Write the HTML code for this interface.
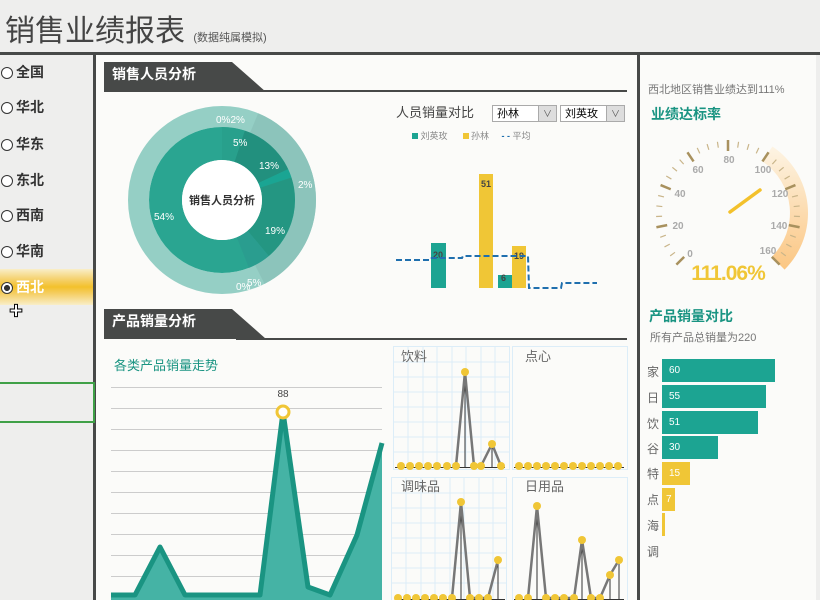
<!DOCTYPE html>
<html><head><meta charset="utf-8"><style>
body{margin:0;width:820px;height:600px;overflow:hidden;background:#eeeeed;font-family:"Liberation Sans","Noto Sans CJK SC",sans-serif;position:relative}
.a{position:absolute}
.rad{position:absolute;left:1px;font-size:14px;font-weight:bold;color:#333;height:20px;line-height:20px}
.rad i{display:inline-block;width:12px;height:12px;border:1px solid #333;border-radius:50%;background:#fff;vertical-align:-2px;margin-right:3px;box-sizing:border-box}
.tab{position:absolute;left:104px;width:162px;height:30px;background:#474948;clip-path:polygon(0 0,128px 0,162px 30px,0 30px);color:#fff;font-weight:bold;font-size:14px;line-height:24px;padding-left:8px;box-sizing:border-box}
.sel{position:absolute;height:17px;border:1px solid #aaa;background:#fff;font-size:11px;line-height:17px;padding-left:4px;box-sizing:border-box}
.sel b{position:absolute;right:0;top:0;width:17px;height:15px;background:#ddd;border-left:1px solid #aaa;font-weight:normal;font-size:9px;text-align:center;color:#555}
.bar{position:absolute;left:662px;height:23px;color:#fff;font-size:10px;line-height:23px;padding-left:7px;box-sizing:border-box}
.bl{position:absolute;left:647px;font-size:12px;color:#666}
</style></head><body>
<div class="a" style="left:5px;top:6px;font-size:30px;color:#444;">销售业绩报表 <span style="font-size:11px;color:#555">(数据纯属模拟)</span></div>
<div class="a" style="left:0;top:52px;width:820px;height:3px;background:#474948"></div>
<div class="a" style="left:96px;top:55px;width:541px;height:545px;background:#fbfbf9"></div>
<div class="a" style="left:640px;top:55px;width:176px;height:545px;background:#fbfbf9"></div>
<div class="a" style="left:93px;top:55px;width:3px;height:545px;background:#474948"></div>
<div class="a" style="left:637px;top:55px;width:3px;height:545px;background:#474948"></div>
<div class="rad" style="top:62px"><i></i>全国</div>
<div class="rad" style="top:97px"><i></i>华北</div>
<div class="rad" style="top:134px"><i></i>华东</div>
<div class="rad" style="top:170px"><i></i>东北</div>
<div class="rad" style="top:205px"><i></i>西南</div>
<div class="rad" style="top:241px"><i></i>华南</div>
<div class="a" style="left:0;top:269px;width:93px;height:36px;background:linear-gradient(#f9eec8,#f5d069 30%,#f3c12c 50%,#f5d069 70%,#f9eec8)"></div>
<div class="rad" style="top:277px;color:#fff"><i style="background:radial-gradient(#333 40%,#fff 45%)"></i>西北</div>
<div class="a" style="left:9px;top:301px;font-size:14px;color:#fff;-webkit-text-stroke:1px #000;font-weight:bold">✚</div>
<div class="a" style="left:0;top:382px;width:95px;height:2px;background:#3fa047"></div>
<div class="a" style="left:0;top:421px;width:95px;height:2px;background:#3fa047"></div>
<div class="a" style="left:93px;top:382px;width:2px;height:41px;background:#3fa047"></div>

<div class="tab" style="top:62px">销售人员分析</div>
<div class="a" style="left:236px;top:90px;width:391px;height:2px;background:#474948"></div>
<div class="tab" style="top:309px">产品销量分析</div>
<div class="a" style="left:236px;top:338px;width:391px;height:2px;background:#474948"></div>

<svg class="a" style="left:0;top:0" width="820" height="600">
<g transform="rotate(-90 222 200)" fill="none">
<circle cx="222" cy="200" r="83.5" stroke="#95cfc5" stroke-width="21"/>
<circle cx="222" cy="200" r="83.5" stroke="#8cc4bb" stroke-width="21" stroke-dasharray="0 33 190 999"/>
<circle cx="222" cy="200" r="56.5" stroke="#2aa591" stroke-width="33"/>
<circle cx="222" cy="200" r="56.5" stroke="#28a08c" stroke-width="33" stroke-dasharray="18 999"/>
<circle cx="222" cy="200" r="56.5" stroke="#22907e" stroke-width="33" stroke-dasharray="0 18 46 999"/>
<circle cx="222" cy="200" r="56.5" stroke="#1aa593" stroke-width="33" stroke-dasharray="0 64 7 999"/>
<circle cx="222" cy="200" r="56.5" stroke="#249682" stroke-width="33" stroke-dasharray="0 71 67 999"/>
<circle cx="222" cy="200" r="56.5" stroke="#2a9d8f" stroke-width="33" stroke-dasharray="0 138 18 999"/>
</g>
<circle cx="222" cy="200" r="40" fill="#fff"/>
<g font-size="10" fill="#fff">
<text x="216" y="123">0%2%</text><text x="233" y="146">5%</text><text x="259" y="169">13%</text><text x="298" y="188">2%</text>
<text x="265" y="234">19%</text><text x="154" y="220">54%</text><text x="236" y="290">0%</text><text x="247" y="286">5%</text></g>
<text x="222" y="204" font-size="11" font-weight="bold" fill="#333" text-anchor="middle">销售人员分析</text>

<g font-size="9" font-weight="bold" fill="#444">
<rect x="431" y="243" width="15" height="45" fill="#1ca492"/>
<rect x="479" y="174" width="14" height="114" fill="#f0c636"/>
<rect x="498" y="275" width="14" height="13" fill="#1ca492"/>
<rect x="512" y="246" width="14" height="42" fill="#f0c636"/>
<text x="433" y="258">20</text><text x="481" y="187">51</text><text x="501" y="281">6</text><text x="514" y="259">19</text></g>
<polyline points="396,260 429,260 430,258 462,258 463,256 528,256 529,288 561,288 562,283 597,283" fill="none" stroke="#1f6fae" stroke-width="2" stroke-dasharray="6,3"/>

<defs><linearGradient id="g1" x1="0" y1="0" x2="0" y2="1"><stop offset="0" stop-color="#fdf4e4"/><stop offset="1" stop-color="#fbc682"/></linearGradient></defs>
<path d="M772.4,146.5 A80,80 0 0 1 784.6,269.6 L771.8,256.8 A62,62 0 0 0 762.4,161.4 Z" fill="url(#g1)"/>
<g stroke="#c9b58a" stroke-width="1.2">
<line x1="728" y1="141" x2="728" y2="147" transform="rotate(-126.56 728 213)"/><line x1="728" y1="141" x2="728" y2="147" transform="rotate(-118.13 728 213)"/><line x1="728" y1="141" x2="728" y2="147" transform="rotate(-109.69 728 213)"/>
<line x1="728" y1="141" x2="728" y2="147" transform="rotate(-92.81 728 213)"/><line x1="728" y1="141" x2="728" y2="147" transform="rotate(-84.38 728 213)"/><line x1="728" y1="141" x2="728" y2="147" transform="rotate(-75.94 728 213)"/>
<line x1="728" y1="141" x2="728" y2="147" transform="rotate(-59.06 728 213)"/><line x1="728" y1="141" x2="728" y2="147" transform="rotate(-50.63 728 213)"/><line x1="728" y1="141" x2="728" y2="147" transform="rotate(-42.19 728 213)"/>
<line x1="728" y1="141" x2="728" y2="147" transform="rotate(-25.31 728 213)"/><line x1="728" y1="141" x2="728" y2="147" transform="rotate(-16.88 728 213)"/><line x1="728" y1="141" x2="728" y2="147" transform="rotate(-8.44 728 213)"/>
<line x1="728" y1="141" x2="728" y2="147" transform="rotate(8.44 728 213)"/><line x1="728" y1="141" x2="728" y2="147" transform="rotate(16.88 728 213)"/><line x1="728" y1="141" x2="728" y2="147" transform="rotate(25.31 728 213)"/>
<line x1="728" y1="141" x2="728" y2="147" transform="rotate(42.19 728 213)"/><line x1="728" y1="141" x2="728" y2="147" transform="rotate(50.63 728 213)"/><line x1="728" y1="141" x2="728" y2="147" transform="rotate(59.06 728 213)"/>
<line x1="728" y1="141" x2="728" y2="147" transform="rotate(75.94 728 213)"/><line x1="728" y1="141" x2="728" y2="147" transform="rotate(84.38 728 213)"/><line x1="728" y1="141" x2="728" y2="147" transform="rotate(92.81 728 213)"/>
<line x1="728" y1="141" x2="728" y2="147" transform="rotate(109.69 728 213)"/><line x1="728" y1="141" x2="728" y2="147" transform="rotate(118.13 728 213)"/><line x1="728" y1="141" x2="728" y2="147" transform="rotate(126.56 728 213)"/>
</g>
<g stroke="#a8915e" stroke-width="2.5">
<line x1="728" y1="140" x2="728" y2="151" transform="rotate(-135 728 213)"/><line x1="728" y1="140" x2="728" y2="151" transform="rotate(-101.25 728 213)"/><line x1="728" y1="140" x2="728" y2="151" transform="rotate(-67.5 728 213)"/>
<line x1="728" y1="140" x2="728" y2="151" transform="rotate(-33.75 728 213)"/><line x1="728" y1="140" x2="728" y2="151" transform="rotate(0 728 213)"/><line x1="728" y1="140" x2="728" y2="151" transform="rotate(33.75 728 213)"/>
<line x1="728" y1="140" x2="728" y2="151" transform="rotate(67.5 728 213)"/><line x1="728" y1="140" x2="728" y2="151" transform="rotate(101.25 728 213)"/><line x1="728" y1="140" x2="728" y2="151" transform="rotate(135 728 213)"/>
</g>
<g font-size="10" font-weight="bold" fill="#aaa" text-anchor="middle">
<text x="690" y="257">0</text><text x="678" y="229">20</text><text x="680" y="197">40</text><text x="698" y="173">60</text><text x="729" y="163">80</text><text x="763" y="173">100</text><text x="780" y="197">120</text><text x="779" y="229">140</text><text x="768" y="254">160</text></g>
<line x1="730" y1="212" x2="760" y2="190" stroke="#f3c12c" stroke-width="3.5" stroke-linecap="round"/>
<text x="728" y="280" font-size="21" font-weight="bold" fill="#f0c636" text-anchor="middle" letter-spacing="-1">111.06%</text>

<g stroke="#ccc" stroke-width="1">
<line x1="111" y1="387.5" x2="382" y2="387.5"/><line x1="111" y1="408.5" x2="382" y2="408.5"/><line x1="111" y1="429.5" x2="382" y2="429.5"/><line x1="111" y1="450.5" x2="382" y2="450.5"/><line x1="111" y1="471.5" x2="382" y2="471.5"/><line x1="111" y1="492.5" x2="382" y2="492.5"/><line x1="111" y1="513.5" x2="382" y2="513.5"/><line x1="111" y1="534.5" x2="382" y2="534.5"/><line x1="111" y1="555.5" x2="382" y2="555.5"/><line x1="111" y1="576.5" x2="382" y2="576.5"/></g>
<polygon points="111,600 111,595 135,595 160,547 185,595 260,595 283,412 308,587 330,595 357,535 382,443 382,600" fill="#45b3a5"/>
<polyline points="111,595 135,595 160,547 185,595 260,595 283,412 308,587 330,595 357,535 382,443" fill="none" stroke="#1a9482" stroke-width="5" stroke-linejoin="round"/>
<circle cx="283" cy="412" r="6" fill="#fff" stroke="#f0c636" stroke-width="3"/>
<text x="283" y="397" font-size="10" fill="#444" text-anchor="middle">88</text>

<g stroke="#dcedf8" fill="none">
<rect x="393.5" y="346.5" width="116" height="123"/><rect x="512.5" y="346.5" width="115" height="123"/>
<rect x="391.5" y="477.5" width="115" height="123"/><rect x="512.5" y="477.5" width="115" height="123"/>
<path d="M408 347V469M423 347V469M437 347V469M452 347V469M466 347V469M481 347V469M495 347V469M394 362H509M394 377H509M394 392H509M394 407H509M394 422H509M394 437H509M394 452H509"/>
<path d="M406 478V600M421 478V600M435 478V600M450 478V600M464 478V600M479 478V600M493 478V600M392 493H506M392 508H506M392 523H506M392 538H506M392 553H506M392 568H506M392 583H506"/>
</g>
<g font-size="13" fill="#666"><text x="401" y="361">饮料</text><text x="525" y="361">点心</text><text x="401" y="491">调味品</text><text x="525" y="491">日用品</text></g>
<g stroke="#333" stroke-width="1"><line x1="395" y1="467.5" x2="505" y2="467.5"/><line x1="514" y1="467.5" x2="624" y2="467.5"/><line x1="395" y1="599.5" x2="505" y2="599.5"/><line x1="514" y1="599.5" x2="624" y2="599.5"/>
<line x1="465" y1="372" x2="465" y2="467"/><line x1="492" y1="444" x2="492" y2="467"/><line x1="461" y1="502" x2="461" y2="600"/><line x1="498" y1="560" x2="498" y2="600"/>
<line x1="537" y1="506" x2="537" y2="600"/><line x1="582" y1="540" x2="582" y2="600"/><line x1="610" y1="575" x2="610" y2="600"/><line x1="619" y1="560" x2="619" y2="600"/></g>
<g fill="none" stroke="#777" stroke-width="2.5" stroke-linejoin="round">
<polyline points="456,466 465,372 474,466 481,466 492,444 501,466"/>
<polyline points="452,598 461,502 470,598 488,598 498,560"/>
<polyline points="528,598 537,506 546,598 574,598 582,540 591,598 600,598 610,575 619,560"/>
</g>
<g fill="#f0c636">
<circle cx="401" cy="466" r="4"/><circle cx="410" cy="466" r="4"/><circle cx="419" cy="466" r="4"/><circle cx="428" cy="466" r="4"/><circle cx="437" cy="466" r="4"/><circle cx="447" cy="466" r="4"/><circle cx="456" cy="466" r="4"/><circle cx="465" cy="372" r="4"/><circle cx="474" cy="466" r="4"/><circle cx="481" cy="466" r="4"/><circle cx="492" cy="444" r="4"/><circle cx="501" cy="466" r="4"/>
<circle cx="519" cy="466" r="4"/><circle cx="528" cy="466" r="4"/><circle cx="537" cy="466" r="4"/><circle cx="546" cy="466" r="4"/><circle cx="555" cy="466" r="4"/><circle cx="564" cy="466" r="4"/><circle cx="573" cy="466" r="4"/><circle cx="582" cy="466" r="4"/><circle cx="591" cy="466" r="4"/><circle cx="600" cy="466" r="4"/><circle cx="609" cy="466" r="4"/><circle cx="618" cy="466" r="4"/>
<circle cx="398" cy="598" r="4"/><circle cx="407" cy="598" r="4"/><circle cx="416" cy="598" r="4"/><circle cx="425" cy="598" r="4"/><circle cx="434" cy="598" r="4"/><circle cx="443" cy="598" r="4"/><circle cx="452" cy="598" r="4"/><circle cx="461" cy="502" r="4"/><circle cx="470" cy="598" r="4"/><circle cx="479" cy="598" r="4"/><circle cx="488" cy="598" r="4"/><circle cx="498" cy="560" r="4"/>
<circle cx="519" cy="598" r="4"/><circle cx="528" cy="598" r="4"/><circle cx="537" cy="506" r="4"/><circle cx="546" cy="598" r="4"/><circle cx="555" cy="598" r="4"/><circle cx="564" cy="598" r="4"/><circle cx="574" cy="598" r="4"/><circle cx="582" cy="540" r="4"/><circle cx="591" cy="598" r="4"/><circle cx="600" cy="598" r="4"/><circle cx="610" cy="575" r="4"/><circle cx="619" cy="560" r="4"/>
</g>
</svg>

<div class="a" style="left:396px;top:102px;font-size:13px;color:#444">人员销量对比</div>
<div class="sel" style="left:492px;top:105px;width:65px">孙林<b>∨</b></div>
<div class="sel" style="left:560px;top:105px;width:65px">刘英玫<b>∨</b></div>
<div class="a" style="left:412px;top:129px;font-size:9px;color:#888"><span style="display:inline-block;width:6px;height:6px;background:#1ca492"></span> 刘英玫 &nbsp;&nbsp;&nbsp;&nbsp; <span style="display:inline-block;width:6px;height:6px;background:#f0c636"></span> 孙林 &nbsp;&nbsp;&nbsp; <span style="color:#1f6fae;font-weight:bold">- -</span> 平均</div>

<div class="a" style="left:114px;top:355px;font-size:13px;color:#1a9482">各类产品销量走势</div>

<div class="a" style="left:648px;top:81px;font-size:11px;color:#777">西北地区销售业绩达到111%</div>
<div class="a" style="left:651px;top:104px;font-size:14px;font-weight:bold;color:#1a9482">业绩达标率</div>
<div class="a" style="left:649px;top:306px;font-size:14px;font-weight:bold;color:#1a9482">产品销量对比</div>
<div class="a" style="left:650px;top:329px;font-size:11px;color:#777">所有产品总销量为220</div>
<div class="bl" style="top:363px">家</div><div class="bar" style="top:359px;width:113px;background:#1ca492">60</div>
<div class="bl" style="top:389px">日</div><div class="bar" style="top:385px;width:104px;background:#1ca492">55</div>
<div class="bl" style="top:415px">饮</div><div class="bar" style="top:411px;width:96px;background:#1ca492">51</div>
<div class="bl" style="top:440px">谷</div><div class="bar" style="top:436px;width:56px;background:#1ca492">30</div>
<div class="bl" style="top:465px">特</div><div class="bar" style="top:462px;width:28px;background:#f0c636">15</div>
<div class="bl" style="top:491px">点</div><div class="bar" style="top:488px;width:13px;background:#f0c636;padding-left:4px">7</div>
<div class="bl" style="top:517px">海</div><div class="bar" style="top:513px;width:3px;background:#f0c636;padding:0"></div>
<div class="bl" style="top:543px">调</div>
</body></html>
